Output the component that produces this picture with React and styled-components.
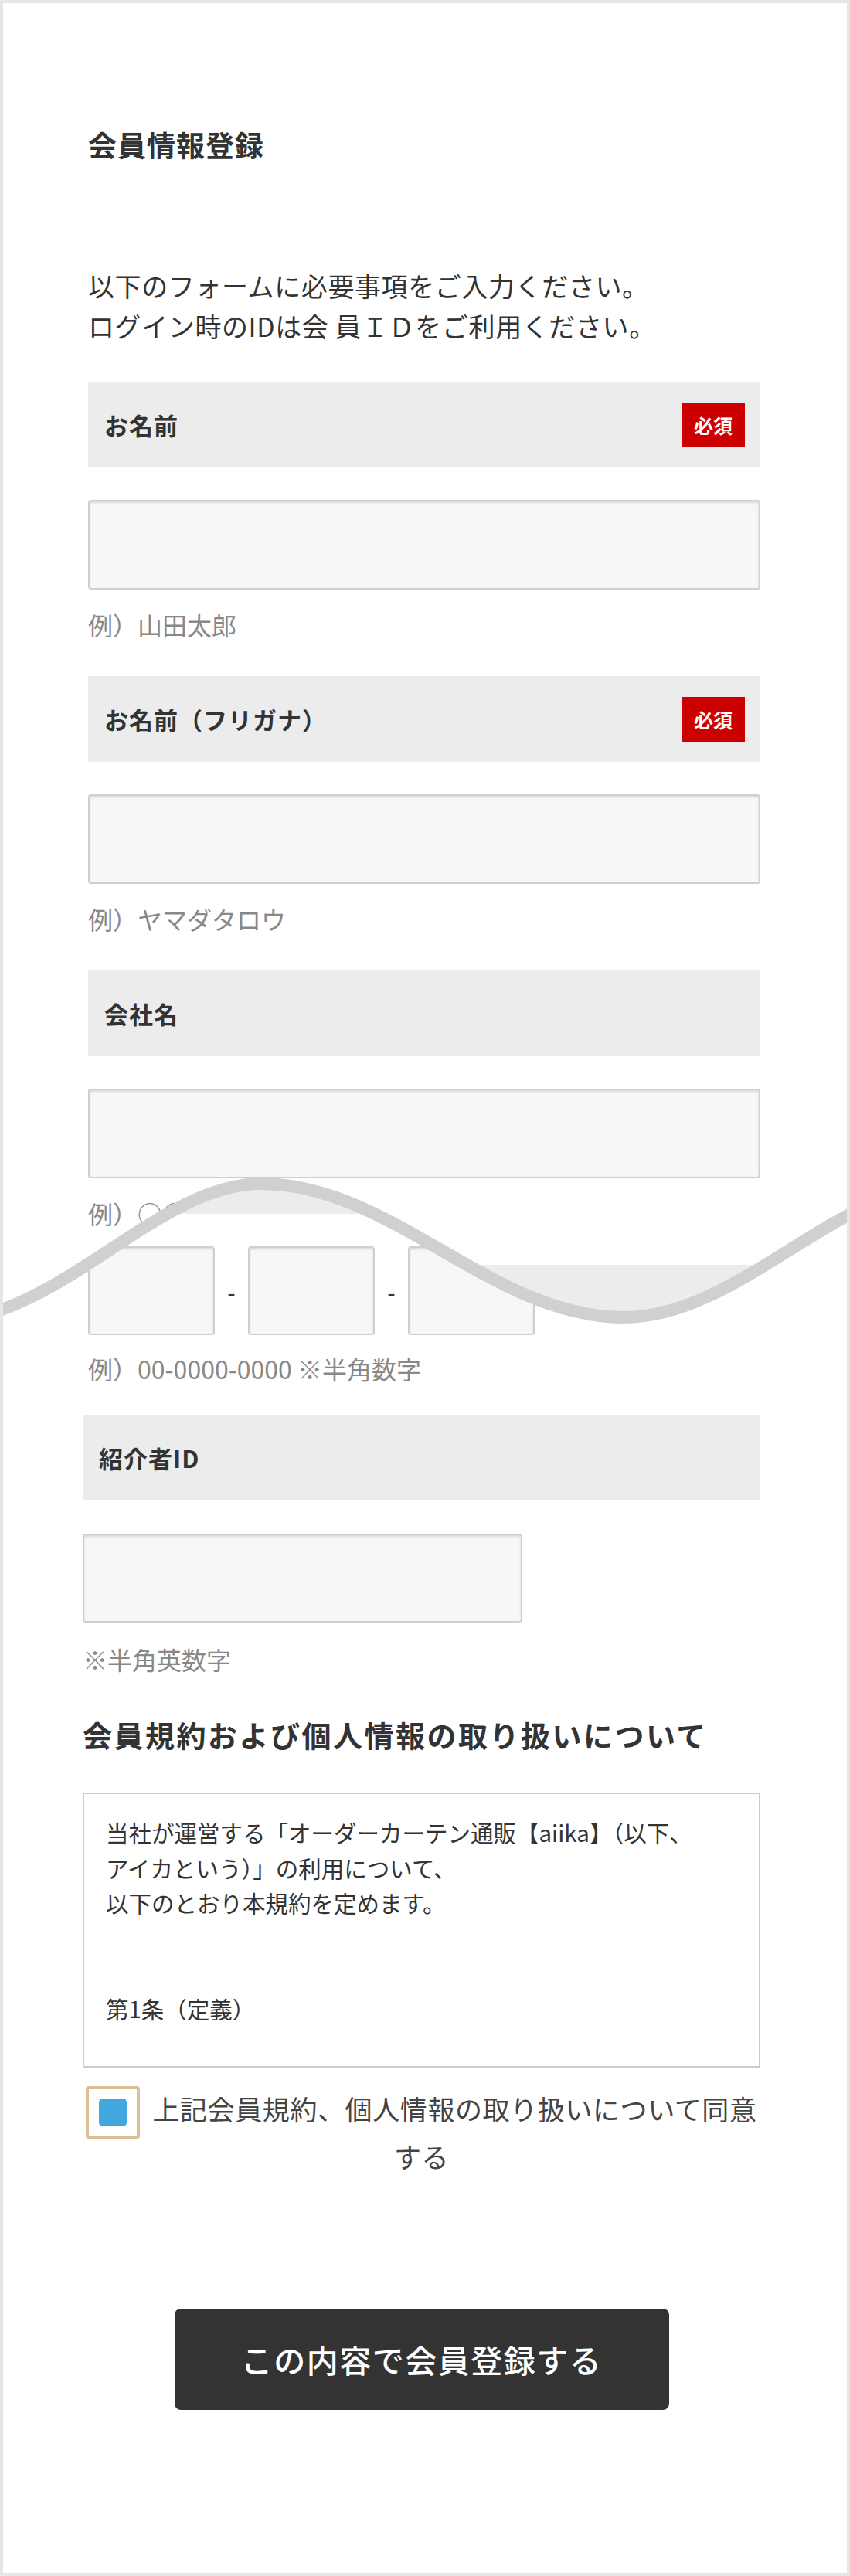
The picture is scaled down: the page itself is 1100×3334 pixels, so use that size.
import React from 'react';
import styled, { createGlobalStyle } from 'styled-components';

const GlobalStyle = createGlobalStyle`
  html, body {
    margin: 0;
    padding: 0;
    background: #ffffff;
  }
  body {
    font-family: "Noto Sans CJK JP", "Noto Sans", "Liberation Sans", sans-serif;
    color: #333333;
  }
`;

// wave seam, local coords of the cut zone (x = page x - 4, y = page y - 1525)
const WAVE = 'M-80,185 C70,185 200,7 333,7 C504,7 632,180 803,180 C953,180 1080,7 1230,7';
const TOP_CLIP =
  'M-200,-400 L1300,-400 L1300,7 L1230,7 C1080,7 953,180 803,180 C632,180 504,7 333,7 C200,7 70,185 -80,185 L-200,185 Z';
const BOTTOM_CLIP =
  'M-200,185 L-80,185 C70,185 200,7 333,7 C504,7 632,180 803,180 C953,180 1080,7 1230,7 L1300,7 L1300,600 L-200,600 Z';

const Frame = styled.div`
  box-sizing: border-box;
  width: 1100px;
  height: 3334px;
  border: 4px solid #e6e6e6;
  background: #ffffff;
  overflow: hidden;
`;

const Column = styled.div`
  margin-left: ${({ $left }) => $left || 110}px;
  width: ${({ $width }) => $width || 870}px;
`;

const Title = styled.h1`
  margin: 158px 0 0;
  font-size: 37px;
  line-height: 50px;
  font-weight: 700;
  letter-spacing: 1px;
  color: #333;
`;

const Intro = styled.p`
  margin: 132px 0 0;
  font-size: 34px;
  line-height: 52px;
  letter-spacing: 0.6px;
  color: #333;
`;

const Field = styled.div`
  margin-top: ${({ $top }) => $top}px;
`;

const LabelBar = styled.div`
  box-sizing: border-box;
  height: ${({ $h }) => $h || 111}px;
  margin-top: ${({ $top }) => $top || 0}px;
  display: flex;
  align-items: center;
  justify-content: space-between;
  padding: 0 20px 0 21px;
  background: #ececec;
`;

const LabelText = styled.span`
  font-size: 31px;
  font-weight: 700;
  letter-spacing: 1px;
  color: #333;
`;

const Required = styled.span`
  display: flex;
  align-items: center;
  justify-content: center;
  width: 82px;
  height: 58px;
  background: #cc0000;
  color: #ffffff;
  font-size: 25px;
  font-weight: 700;
`;

const TextInput = styled.input`
  display: block;
  box-sizing: border-box;
  width: ${({ $w }) => $w || '100%'};
  height: ${({ $h }) => $h || 116}px;
  margin-top: ${({ $top }) => $top ?? 42}px;
  border: 2px solid #cfcfcf;
  border-radius: 4px;
  background: #f7f7f7;
  box-shadow: inset 0 2px 3px rgba(0, 0, 0, 0.12);
  outline: none;
  font-size: 30px;
  padding: 0 16px;
`;

const Hint = styled.p`
  margin: ${({ $top }) => $top || 22}px 0 0;
  font-size: 32px;
  line-height: 46px;
  color: #888;
`;

const CutZone = styled.div`
  position: relative;
  display: grid;
  grid-template-rows: 203px;
  height: 203px;
  overflow: hidden;
`;

const Layer = styled.div`
  grid-area: 1 / 1;
  background: #ffffff;
  clip-path: path('${({ $clip }) => $clip}');
`;

const Seam = styled.svg`
  position: absolute;
  left: 0;
  top: 0;
  width: 1092px;
  height: 203px;
  pointer-events: none;
`;

const TelRow = styled.div`
  display: flex;
  align-items: center;
  margin-top: 42px;
`;

const TelBox = styled(TextInput)`
  width: 164px;
  height: 115px;
  margin-top: 0;
`;

const Dash = styled.span`
  width: 43px;
  text-align: center;
  font-size: 30px;
  color: #333;
`;

const SectionHeading = styled.h2`
  margin: 47px 0 0;
  font-size: 38px;
  line-height: 56px;
  font-weight: 700;
  letter-spacing: 2.5px;
  color: #333;
`;

const TermsBox = styled.div`
  box-sizing: border-box;
  height: 356px;
  margin-top: 47px;
  padding: 27px 20px 0 28px;
  border: 2px solid #cccccc;
  background: #ffffff;
  overflow: hidden;
  font-size: 29.5px;
  line-height: 45.5px;
  color: #333;
  white-space: nowrap;
`;

const AgreeRow = styled.label`
  display: block;
  margin-top: 24px;
  text-align: center;
  font-size: 35px;
  line-height: 58px;
  letter-spacing: 0.6px;
  color: #444;
`;

const CheckBox = styled.span`
  display: inline-flex;
  align-items: center;
  justify-content: center;
  box-sizing: border-box;
  width: 70px;
  height: 68px;
  margin: -8px 16px -6px 0;
  vertical-align: middle;
  border: 4px solid #d8bf95;
  border-radius: 4px;
  background: #ffffff;
`;

const CheckFill = styled.span`
  width: 36px;
  height: 36px;
  border-radius: 5px;
  background: #40a8de;
`;

const SubmitButton = styled.button`
  display: flex;
  align-items: center;
  justify-content: center;
  width: 640px;
  height: 131px;
  margin: 168px auto 0;
  border: none;
  border-radius: 8px;
  background: #333333;
  color: #ffffff;
  font-family: inherit;
  font-size: 41px;
  font-weight: 500;
  letter-spacing: 1.5px;
  cursor: pointer;
`;

const FormField = ({ top, label, required, hint }) => (
  <Field $top={top}>
    <LabelBar>
      <LabelText>{label}</LabelText>
      {required && <Required>必須</Required>}
    </LabelBar>
    <TextInput type="text" />
    {hint && <Hint>{hint}</Hint>}
  </Field>
);

const App = () => (
  <>
    <GlobalStyle />
    <Frame>
      <Column>
        <Title>会員情報登録</Title>
        <Intro>
          以下のフォームに必要事項をご入力ください。
          <br />
          ログイン時のIDは会 員ＩＤをご利用ください。
        </Intro>
        <FormField top={46} label="お名前" required hint="例）山田太郎" />
        <FormField top={44} label="お名前（フリガナ）" required hint="例）ヤマダタロウ" />
        <FormField top={44} label="会社名" />
      </Column>

      <CutZone>
        <Layer $clip={TOP_CLIP}>
          <Column>
            <Hint>例）○○株式会社</Hint>
            <LabelBar $top={44}>
              <LabelText>電話番号</LabelText>
            </LabelBar>
          </Column>
        </Layer>
        <Layer $clip={BOTTOM_CLIP}>
          <Column>
            <LabelBar $h={46} />
            <TelRow>
              <TelBox type="text" />
              <Dash>-</Dash>
              <TelBox type="text" />
              <Dash>-</Dash>
              <TelBox type="text" />
            </TelRow>
          </Column>
        </Layer>
        <Seam viewBox="0 0 1092 203">
          <path d={WAVE} fill="none" stroke="#d0d0d0" strokeWidth="16" />
        </Seam>
      </CutZone>

      <Column>
        <Hint $top={20}>例）00-0000-0000 ※半角数字</Hint>
      </Column>

      <Column $left={103} $width={877}>
        <LabelBar $top={37}>
          <LabelText>紹介者ID</LabelText>
        </LabelBar>
        <TextInput type="text" $w="569px" $h={115} $top={43} />
        <Hint $top={24}>※半角英数字</Hint>

        <SectionHeading>会員規約および個人情報の取り扱いについて</SectionHeading>
        <TermsBox>
          当社が運営する「オーダーカーテン通販【aiika】（以下、
          <br />
          アイカという）」の利用について、
          <br />
          以下のとおり本規約を定めます。
          <br />
          <br />
          <br />
          第1条（定義）
        </TermsBox>

        <AgreeRow>
          <CheckBox>
            <CheckFill />
          </CheckBox>
          上記会員規約、個人情報の取り扱いについて同意する
        </AgreeRow>

        <SubmitButton type="button">この内容で会員登録する</SubmitButton>
      </Column>
    </Frame>
  </>
);

export default App;
